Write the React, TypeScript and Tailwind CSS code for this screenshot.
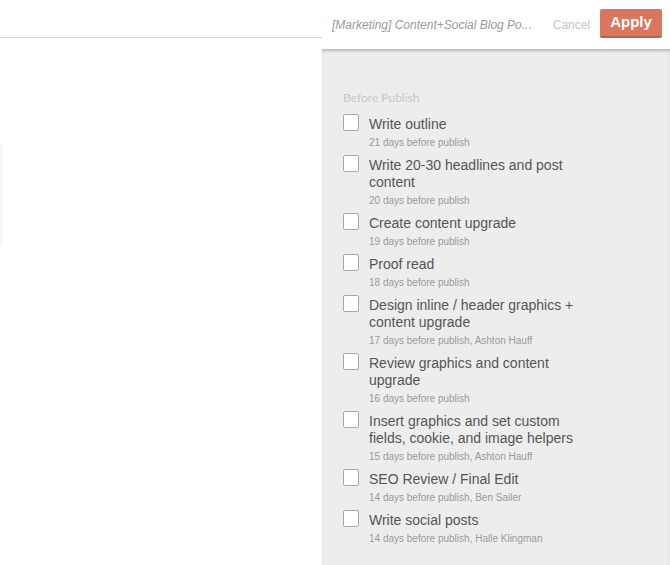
import React from "react";

type Task = {
  title: string;
  meta: string;
};

const tasks: Task[] = [
  { title: "Write outline", meta: "21 days before publish" },
  { title: "Write 20-30 headlines and post content", meta: "20 days before publish" },
  { title: "Create content upgrade", meta: "19 days before publish" },
  { title: "Proof read", meta: "18 days before publish" },
  {
    title: "Design inline / header graphics + content upgrade",
    meta: "17 days before publish, Ashton Hauff",
  },
  { title: "Review graphics and content upgrade", meta: "16 days before publish" },
  {
    title: "Insert graphics and set custom fields, cookie, and image helpers",
    meta: "15 days before publish, Ashton Hauff",
  },
  { title: "SEO Review / Final Edit", meta: "14 days before publish, Ben Sailer" },
  { title: "Write social posts", meta: "14 days before publish, Halle Klingman" },
];

const TaskRow = ({ task }: { task: Task }) => {
  return (
    <label className="flex items-start gap-[10px] pb-[8px] cursor-pointer">
      <span className="mt-[-2px] w-[16px] h-[17px] shrink-0 bg-white border border-[#a8a8a8] rounded-[2px]"></span>
      <div className="w-[212px]">
        <p className="text-[14px] leading-[17px] text-[#555555]">{task.title}</p>
        <p className="mt-[3px] text-[10px] leading-[13px] text-[#9a9a9a]">{task.meta}</p>
      </div>
    </label>
  );
};

const App = () => {
  return (
    <div
      className="flex w-[670px] h-[565px] bg-white overflow-hidden"
      style={{ fontFamily: '"Liberation Sans", Arial, sans-serif' }}
    >
      {/* left side: page behind the drawer */}
      <div className="w-[322px] flex flex-col">
        <div className="h-[38px] border-b border-[#cfcfcf]"></div>
        <div className="mt-[106px] w-[2px] h-[102px] border-r border-[#eef3f3] bg-[#f7fafa]"></div>
      </div>

      {/* right side: template drawer */}
      <div className="w-[348px] flex flex-col">
        <div className="h-[49px] flex items-center pl-[10px] pr-[8px] bg-white">
          <span className="w-[205px] text-[12px] italic text-[#9a9a9a] truncate">
            [Marketing] Content+Social Blog Po...
          </span>
          <button className="ml-[16px] text-[12px] text-[#c4c4c4]">Cancel</button>
          <button className="ml-[10px] w-[62px] h-[29px] mt-[-3px] bg-[#d9765e] border-b-2 border-[#c0604a] rounded-[2px] text-white text-[15px] font-bold">
            Apply
          </button>
        </div>

        <div className="flex-1 bg-[#ededed] pl-[21px] pt-[41px] shadow-[inset_0_3px_3px_-1px_rgba(0,0,0,0.22)]">
          <h3
            className="text-[12px] leading-[16px] text-[#c8c8c8] mb-[10px]"
            style={{ fontFamily: 'Lato, "Liberation Sans", sans-serif' }}
          >
            Before Publish
          </h3>
          {tasks.map((task) => (
            <TaskRow key={task.title} task={task} />
          ))}
        </div>
      </div>
    </div>
  );
};

export default App;
